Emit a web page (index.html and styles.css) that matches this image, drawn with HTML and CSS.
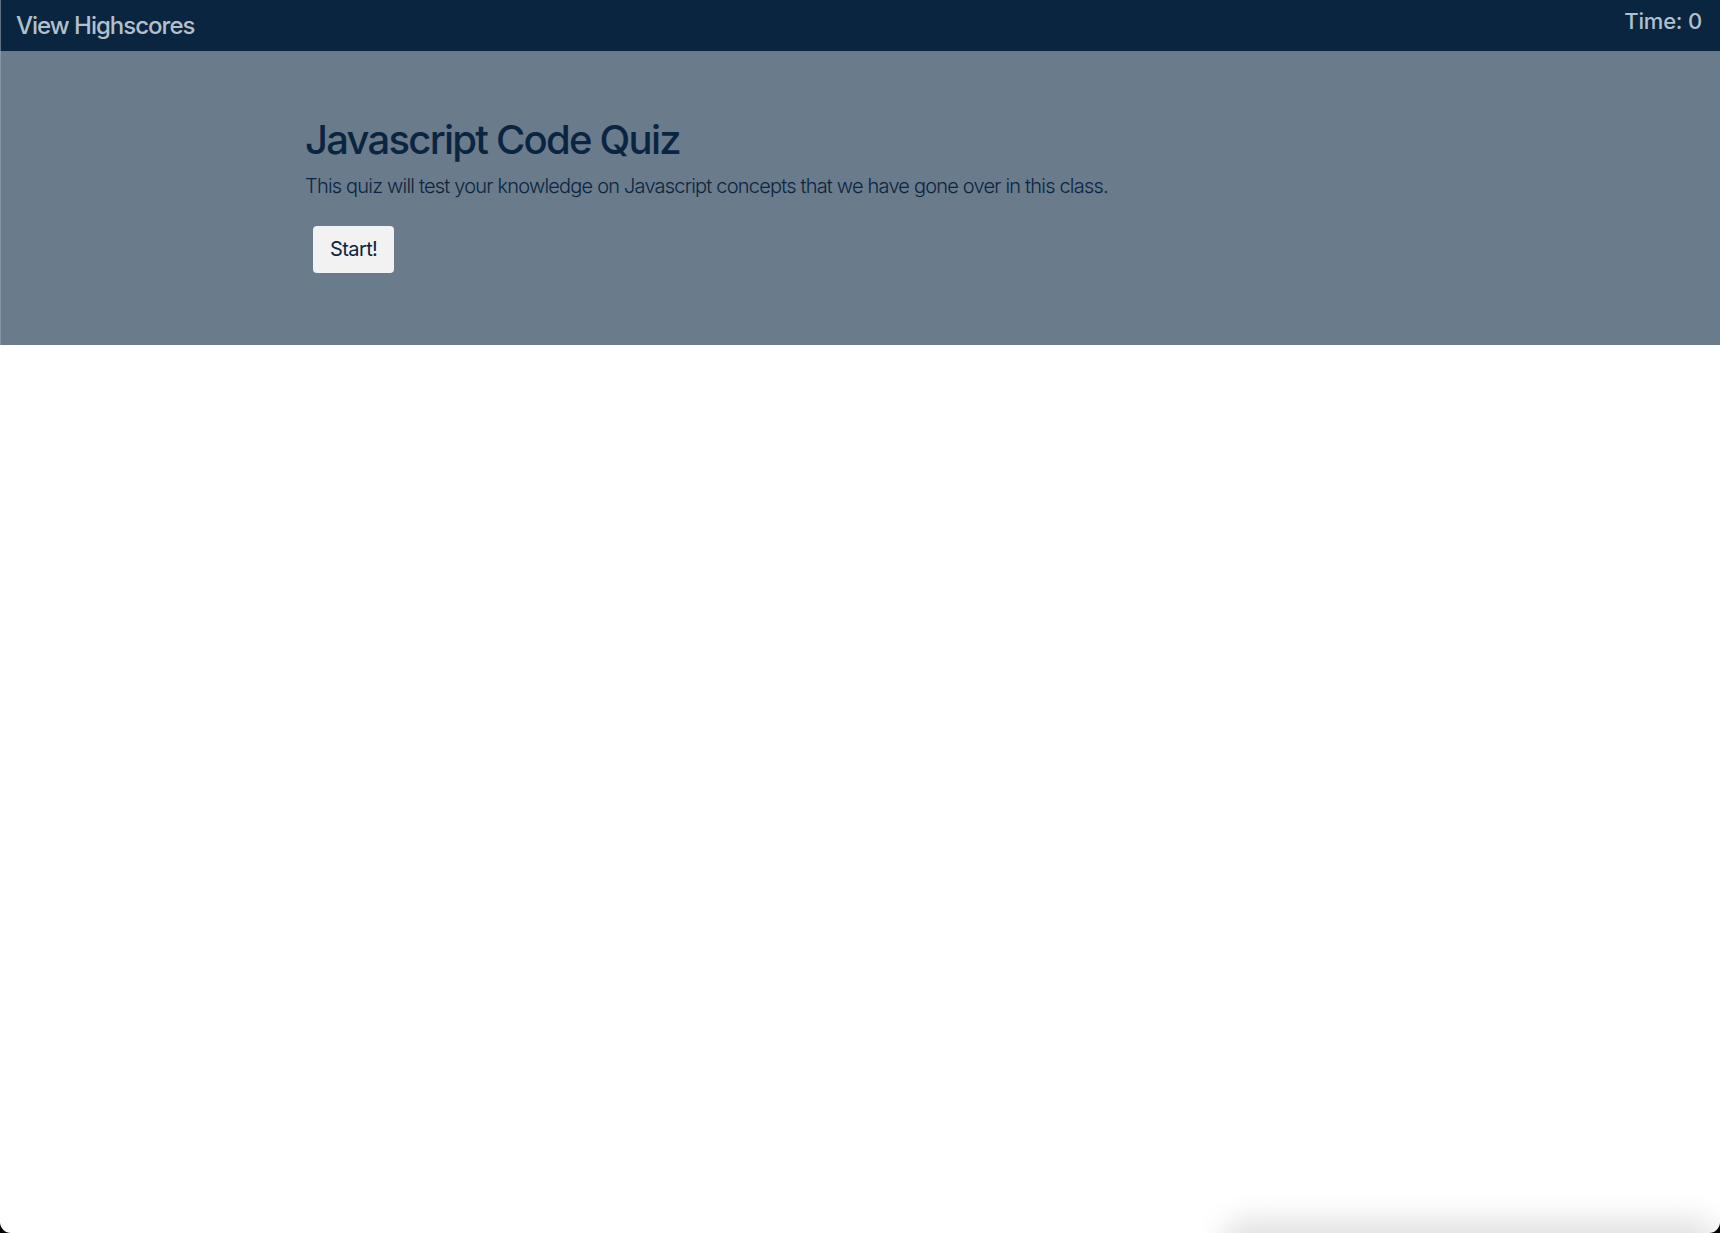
FILE: index.html
```html
<!DOCTYPE html>
<html lang="en">
<head>
<meta charset="utf-8">
<title>Javascript Code Quiz</title>
<link rel="stylesheet" href="styles.css">
</head>
<body>
<header class="topbar">
  <a class="highscores" href="#">View Highscores</a>
  <span class="timer">Time: 0</span>
</header>
<section class="jumbo">
  <div class="container">
    <h1 class="title">Javascript Code Quiz</h1>
    <p class="lead">This quiz will test your knowledge on Javascript concepts that we have gone over in this class.</p>
    <button class="start">Start!</button>
  </div>
</section>
<div class="shade"></div>
</body>
</html>
```
FILE: styles.css
```css
html {
  background: #000;
}
body {
  margin: 0;
  min-height: 1233px;
  background: #fff;
  font-family: Inter, "Noto Sans", sans-serif;
  border-radius: 0 0 11px 11px;
  overflow: hidden;
  position: relative;
}
.topbar {
  height: 51px;
  background: #0a2540;
  display: flex;
  justify-content: space-between;
  align-items: flex-start;
  box-shadow: inset 1px 0 0 #5d6f82;
}
.highscores {
  color: #b3c0cb;
  text-decoration: none;
  font-size: 24px;
  font-weight: 500;
  line-height: 1;
  letter-spacing: -1px;
  margin: 14px 0 0 16px;
}
.timer {
  color: #b3c0cb;
  font-size: 22px;
  font-weight: 500;
  line-height: 1;
  letter-spacing: -0.2px;
  margin: 10px 18px 0 0;
}
.jumbo {
  background: #6a7b8c;
  padding: 65px 0 72px;
  box-shadow: inset 1px 0 0 #8896a4;
}
.container {
  max-width: 1140px;
  margin: 0 auto;
  padding: 0 15px;
  box-sizing: border-box;
}
.title {
  margin: 0 0 7px;
  font-size: 40px;
  font-weight: 500;
  line-height: 1.2;
  color: #0a2540;
  letter-spacing: -1.75px;
}
.lead {
  margin: 0 0 25px;
  font-size: 20px;
  font-weight: 300;
  line-height: 1.5;
  color: #0a2540;
  letter-spacing: -0.8px;
}
.start {
  margin-left: 8px;
  font-family: inherit;
  font-size: 20px;
  line-height: 1.5;
  letter-spacing: -0.6px;
  padding: 8px 17px 9px;
  color: #0a2540;
  background: #f2f2f2;
  border: none;
  border-radius: 4px;
}
.shade {
  position: absolute;
  left: 1230px;
  right: 10px;
  bottom: -40px;
  height: 40px;
  box-shadow: 0 -4px 30px 10px rgba(0, 0, 0, 0.12);
  border-radius: 20px;
}
```
